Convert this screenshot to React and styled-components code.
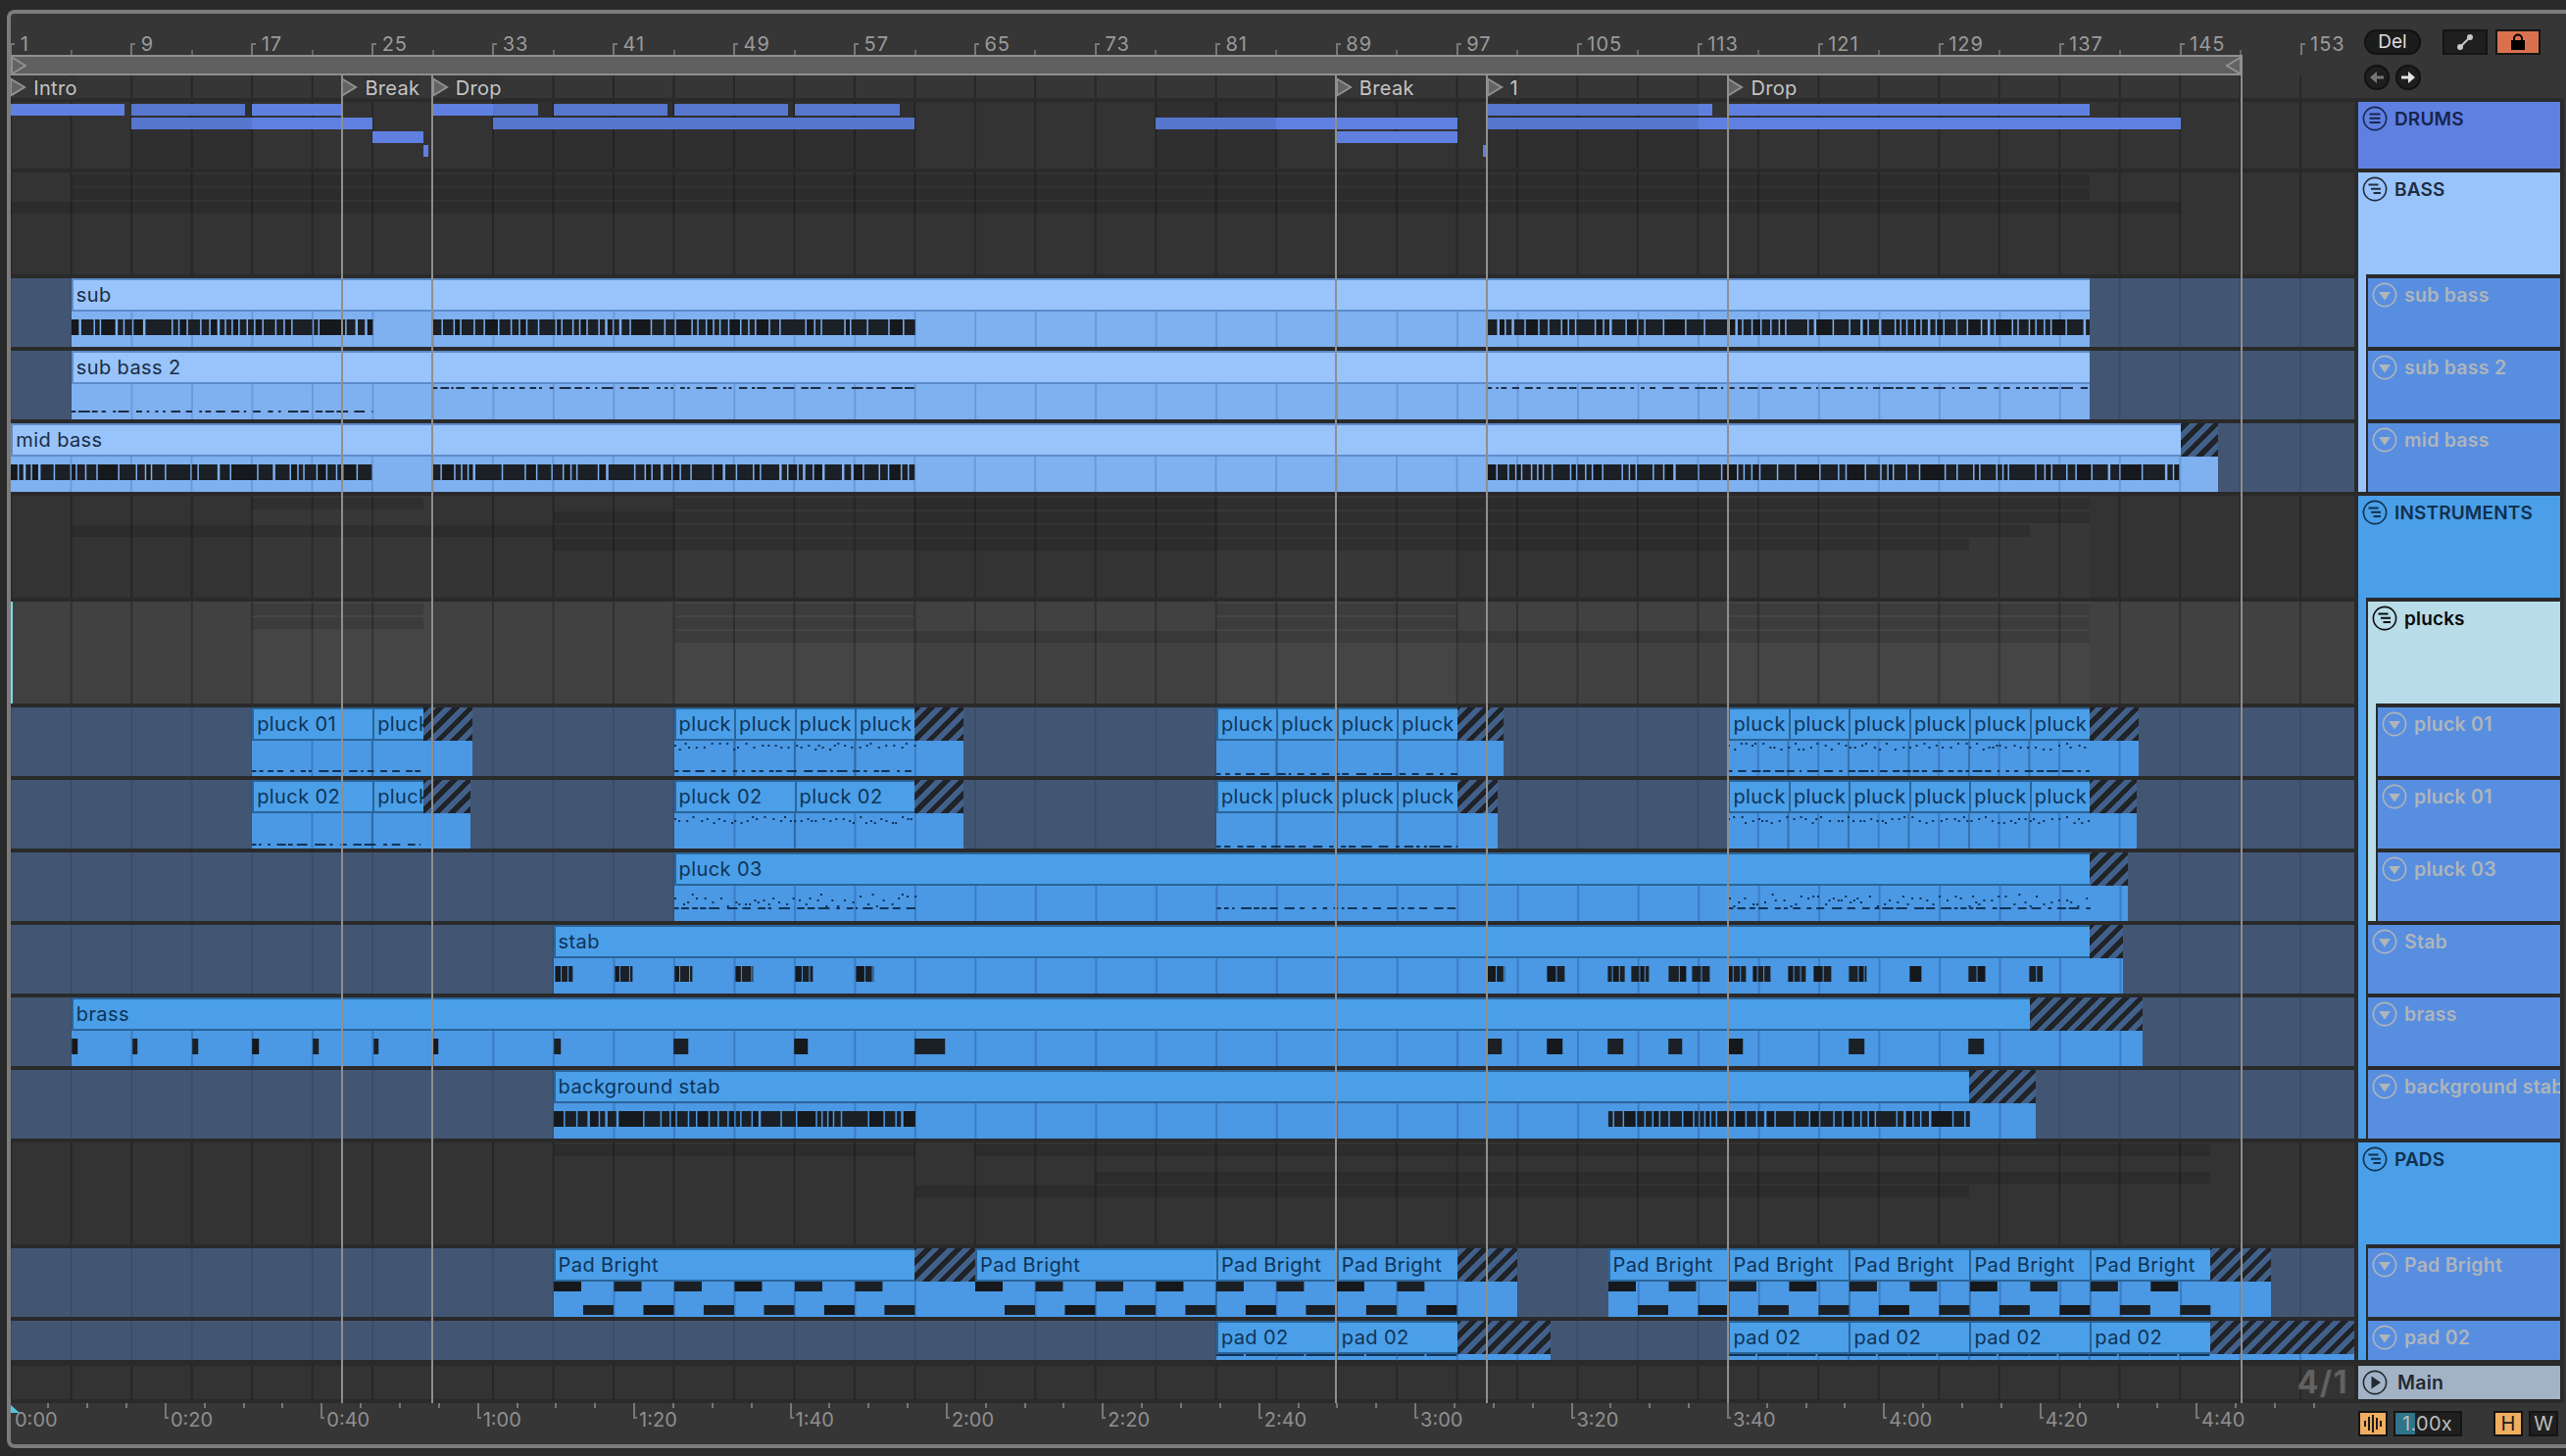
/* --- Packages --- */
import React from 'react';
import styled, { createGlobalStyle } from 'styled-components';

/* --- Timeline helpers --- */
const BAR = 15.37;
const ORIGIN = 0.3; // bar 1, measured from the left edge of the lanes
const barX = bar => ORIGIN + (bar - 1) * BAR;
const LANE_WIDTH = 2391;

const rng = seed => {
  let s = seed;
  return () => {
    s = (s * 1664525 + 1013904223) % 4294967296;
    return s / 4294967296;
  };
};

const range = (from, to, step) => {
  const out = [];
  for (let v = from; v <= to; v += step) out.push(v);
  return out;
};

/* --- Note drawing: every kind returns [x, y, w, h] in lane pixels --- */
const dense = (from, to, y, h, seed) => {
  const rand = rng(seed);
  const out = [];
  let x = barX(from);
  const end = barX(to);
  while (x < end) {
    const w = 4 + rand() * rand() * 26;
    out.push([x, y, Math.min(w, end - x), h]);
    x += w + 1.5 + Math.round(rand() * rand()) * 1;
  }
  return out;
};

const dashes = (from, to, y, seed) => {
  const rand = rng(seed);
  const out = [];
  let x = barX(from);
  const end = barX(to);
  while (x < end) {
    const w = 2 + rand() * 10;
    out.push([x, y, Math.min(w, end - x), 2]);
    x += w + 2 + rand() * 6;
  }
  return out;
};

const dots = (from, to, top, spread, seed) => {
  const rand = rng(seed);
  const out = [];
  let x = barX(from);
  const end = barX(to);
  while (x < end) {
    out.push([x, top + Math.round((rand() * spread) / 2) * 2, 2, 2]);
    x += 3 + rand() * 6;
  }
  return out;
};

const chunks = (spans, y, h) => spans.map(([a, b]) => [a - 11, y, b - a, h]);

const stabChunk = (x, w, out, rand) => {
  let at = x;
  while (at < x + w) {
    const part = 4 + rand() * 7;
    out.push([at, 8, Math.min(part, x + w - at), 16]);
    at += part + 1;
  }
};

const stabNotes = () => {
  const rand = rng(11);
  const out = [];
  [566, 627, 688, 750, 811, 873, 1517, 1578, 1640, 1664, 1702, 1726, 1763, 1788, 1824, 1850, 1886, 2008, 2070].forEach(x =>
    stabChunk(x - 11, x === 2070 ? 14 : 18, out, rand)
  );
  out.push([1937, 8, 12, 16]);
  return out;
};

const padNotes = (from, to, top, bottom, h) => {
  const out = [];
  range(from, to - 4, 4).forEach(bar => {
    out.push([barX(bar), top, 28, h]);
    out.push([barX(bar) + 30, bottom, 31, h]);
  });
  return out;
};

/* --- Data --- */
const BASS_CLIP = { head: '#98c4fb', body: '#7fb0ef', edge: '#5c8cca', line: '#6a9ade', text: '#1c2c44' };
const INST_CLIP = { head: '#4a9fe8', body: '#4b98e4', edge: '#2b6498', line: '#3c7dc4', text: '#0f3357' };

const LIT_BANDS = [[17, 29], [45, 61], [81, 97], [115, 139]];

const TRACKS = [
  {
    id: 'drums',
    h: 68,
    tone: 'group',
    bright: true,
    strips: [
      [[1, 8.5], [9, 16.5], [17, 23], [29, 36], [37, 44.6], [45, 52.6], [53, 60], [99, 113.9], [115, 139]],
      [[9, 25], [33, 61], [77, 97], [99, 145]],
      [[25, 28.4], [89, 97]],
      [[28.4, 28.7], [98.7, 99]]
    ],
    dimmed: [[9, 17], [33, 61], [77, 85], [99, 113]]
  },
  { id: 'bass', h: 104, tone: 'group', strips: [[[5, 139]], [[5, 139]], [[1, 145]]] },
  {
    id: 'sub',
    h: 70,
    tone: 'track',
    clip: BASS_CLIP,
    blocks: [{ segs: [[5, 139, 'sub']] }],
    notes: [...dense(5, 25, 8, 16, 3), ...dense(29, 61, 8, 16, 5), ...dense(99, 139, 8, 16, 7)]
  },
  {
    id: 'sub2',
    h: 70,
    tone: 'track',
    clip: BASS_CLIP,
    blocks: [{ segs: [[5, 139, 'sub bass 2']] }],
    notes: [...dashes(5, 25, 27, 9), ...dashes(29, 61, 3, 10), ...dashes(99, 139, 3, 12)]
  },
  {
    id: 'mid',
    h: 70,
    tone: 'track',
    clip: BASS_CLIP,
    blocks: [{ segs: [[1, 145, 'mid bass']], end: 147.5 }],
    notes: [...dense(1, 25, 8, 16, 13), ...dense(29, 61, 8, 16, 15), ...dense(99, 145, 8, 16, 17)]
  },
  { id: 'inst', h: 104, tone: 'group', lit: LIT_BANDS, strips: [[[17, 28.4], [45, 139]], [[37, 139]], [[5, 135]], [[37, 131]]] },
  {
    id: 'plucks',
    h: 104,
    tone: 'plucks',
    lit: LIT_BANDS,
    strips: [
      [[17, 28.4], [45, 61], [81, 97], [115, 139]],
      [[17, 28.4], [45, 61], [81, 97], [115, 139]],
      [[45, 139]]
    ]
  },
  {
    id: 'pluck1',
    h: 70,
    tone: 'track',
    clip: INST_CLIP,
    blocks: [
      { segs: [[17, 25, 'pluck 01'], [25, 28.4, 'pluck']], end: 31.65 },
      { segs: [[45, 49, 'pluck'], [49, 53, 'pluck'], [53, 57, 'pluck'], [57, 61, 'pluck']], end: 64.25 },
      { segs: [[81, 85, 'pluck'], [85, 89, 'pluck'], [89, 93, 'pluck'], [93, 97, 'pluck']], end: 100.1 },
      {
        segs: [[115, 119, 'pluck'], [119, 123, 'pluck'], [123, 127, 'pluck'], [127, 131, 'pluck'], [131, 135, 'pluck'], [135, 139, 'pluck']],
        end: 142.2
      }
    ],
    notes: [
      ...dashes(17, 28.2, 30, 21),
      ...dots(45, 61, 2, 6, 22),
      ...dashes(45, 61, 30, 23),
      ...dashes(81, 97, 33, 24),
      ...dots(115, 139, 2, 6, 25),
      ...dashes(115, 139, 30, 26)
    ]
  },
  {
    id: 'pluck2',
    h: 70,
    tone: 'track',
    clip: INST_CLIP,
    blocks: [
      { segs: [[17, 25, 'pluck 02'], [25, 28.4, 'pluck']], end: 31.5 },
      { segs: [[45, 53, 'pluck 02'], [53, 61, 'pluck 02']], end: 64.25 },
      { segs: [[81, 85, 'pluck'], [85, 89, 'pluck'], [89, 93, 'pluck'], [93, 97, 'pluck']], end: 99.7 },
      {
        segs: [[115, 119, 'pluck'], [119, 123, 'pluck'], [123, 127, 'pluck'], [127, 131, 'pluck'], [131, 135, 'pluck'], [135, 139, 'pluck']],
        end: 142.1
      }
    ],
    notes: [
      ...dashes(17, 28.2, 31, 31),
      ...dots(45, 61, 3, 6, 32),
      ...dashes(81, 97, 33, 33),
      ...dots(115, 139, 3, 6, 34)
    ]
  },
  {
    id: 'pluck3',
    h: 70,
    tone: 'track',
    clip: INST_CLIP,
    blocks: [{ segs: [[45, 139, 'pluck 03']], end: 141.5 }],
    notes: [...dots(45, 61, 8, 12, 41), ...dashes(45, 61, 22, 42), ...dashes(81, 97, 22, 43), ...dots(115, 139, 8, 12, 44), ...dashes(115, 139, 22, 45)]
  },
  {
    id: 'stab',
    h: 70,
    tone: 'track',
    clip: INST_CLIP,
    blocks: [{ segs: [[37, 139, 'stab']], end: 141.2 }],
    notes: stabNotes()
  },
  {
    id: 'brass',
    h: 70,
    tone: 'track',
    clip: INST_CLIP,
    blocks: [{ segs: [[5, 135, 'brass']], end: 142.5 }],
    notes: chunks(
      [[73, 79], [135, 140], [196, 202], [257, 264], [319, 325], [381, 386], [442, 447], [565, 572], [687, 702], [810, 824], [933, 964],
        [1517, 1532], [1578, 1594], [1640, 1656], [1702, 1716], [1763, 1778], [1886, 1902], [2008, 2024]],
      8,
      16
    )
  },
  {
    id: 'bgstab',
    h: 70,
    tone: 'track',
    clip: INST_CLIP,
    blocks: [{ segs: [[37, 131, 'background stab']], end: 135.4 }],
    notes: [...dense(37, 61, 8, 16, 51), ...dense(107, 131, 8, 16, 53)]
  },
  { id: 'pads', h: 104, tone: 'group', strips: [[[37, 61], [65, 147]], [], [[73, 147]], [[61, 131]]] },
  {
    id: 'bright',
    h: 70,
    tone: 'track',
    clip: INST_CLIP,
    blocks: [
      { segs: [[37, 61, 'Pad Bright']], end: 65 },
      { segs: [[65, 81, 'Pad Bright'], [81, 89, 'Pad Bright'], [89, 97, 'Pad Bright']], end: 101 },
      { segs: [[107, 115, 'Pad Bright'], [115, 123, 'Pad Bright'], [123, 131, 'Pad Bright'], [131, 139, 'Pad Bright'], [139, 147, 'Pad Bright']], end: 151 }
    ],
    notes: [...padNotes(37, 61, 0, 24, 10), ...padNotes(65, 97, 0, 24, 10), ...padNotes(107, 147, 0, 24, 10)]
  },
  {
    id: 'pad2',
    h: 40,
    tone: 'track',
    clip: INST_CLIP,
    blocks: [
      { segs: [[81, 89, 'pad 02'], [89, 97, 'pad 02']], end: 103.2 },
      { segs: [[115, 123, 'pad 02'], [123, 131, 'pad 02'], [131, 139, 'pad 02'], [139, 147, 'pad 02']], end: 157 }
    ],
    notes: [...padNotes(81, 97, 0, 0, 2), ...padNotes(115, 147, 0, 0, 2)]
  }
];

const LOCATORS = [
  { bar: 1, name: 'Intro' },
  { bar: 23, name: 'Break' },
  { bar: 29, name: 'Drop' },
  { bar: 89, name: 'Break' },
  { bar: 99, name: '1' },
  { bar: 115, name: 'Drop' }
];

const TIME_STEP = 159.4;
const TIME_ORIGIN = -2.5;
const TIMES = ['0:00', '0:20', '0:40', '1:00', '1:20', '1:40', '2:00', '2:20', '2:40', '3:00', '3:20', '3:40', '4:00', '4:20', '4:40'];

/* --- Styles --- */
const GlobalStyle = createGlobalStyle`
  html, body {
    margin: 0;
    background: #2a2a2a;
    font-family: Inter, "Liberation Sans", sans-serif;
  }
  #root { height: 1486px; overflow: hidden; }
`;

const Frame = styled.div`
  position: relative;
  box-sizing: border-box;
  width: 2611px;
  height: 1468px;
  margin: 10px 0 0 7px;
  display: flex;
  flex-direction: column;
  background: #363636;
  border: solid #7c7c7c;
  border-width: 4px 0 4px 4px;
  border-radius: 8px 0 0 8px;
  overflow: hidden;
`;

const Header = styled.div`
  height: 86px;
  display: flex;
`;

const RulerArea = styled.div`
  position: relative;
  width: ${LANE_WIDTH}px;
`;

const BarTick = styled.div`
  position: absolute;
  top: 30px;
  width: 5px;
  height: 12px;
  border-left: 2px solid #777;
  border-top: 2px solid #777;
  box-sizing: border-box;
`;

const MinorTick = styled.div`
  position: absolute;
  top: 37px;
  width: 2px;
  height: 5px;
  background: #666;
`;

const BarLabel = styled.span`
  position: absolute;
  top: 19px;
  color: #9a9a9a;
  font-size: 20px;
  letter-spacing: 1px;
  line-height: 24px;
`;

const LoopBrace = styled.div`
  position: absolute;
  top: 42px;
  left: 0;
  height: 21px;
  width: 2276px;
  box-sizing: border-box;
  background: #5f5f5f;
  border: solid #8f8f8f;
  border-width: 2px 2px 2px 0;
`;

const LocatorRow = styled.div`
  position: absolute;
  top: 63px;
  left: 0;
  right: 0;
  height: 23px;
  background-image: linear-gradient(90deg, transparent calc(100% - 2px), #272727 0);
  background-size: ${BAR * 4}px 100%;
  background-position-x: 1.3px;
`;

const LocatorMark = styled.div`
  position: absolute;
  top: 2px;
  height: 20px;
  display: flex;
  align-items: center;
  gap: 7px;
`;

const LocatorName = styled.span`
  color: #c4c4c4;
  font-size: 20px;
  letter-spacing: 0.3px;
  line-height: 22px;
  padding-top: 1px;
  background: #333;
`;

const Controls = styled.div`
  flex: 1;
  padding: 16px 0 0 10px;
  display: grid;
  grid-template-columns: 58px 22px 46px 8px 46px;
  grid-template-rows: 26px 26px;
  row-gap: 10px;
  align-items: start;
`;

const Pill = styled.div`
  height: 26px;
  border-radius: 13px;
  background: #1c1c1c;
  box-shadow: inset 0 0 0 2px #131313;
  color: #dddddd;
  font-size: 19px;
  line-height: 26px;
  text-align: center;
`;

const HeadButton = styled.div`
  grid-column: ${p => p.$col};
  height: 26px;
  box-sizing: border-box;
  border: 2px solid #141414;
  background: ${p => p.$bg};
  display: flex;
  align-items: center;
  justify-content: center;
`;

const ArrowPair = styled.div`
  grid-column: 1;
  grid-row: 2;
  display: flex;
  justify-content: space-between;
`;

const ArrowButton = styled.div`
  width: 26px;
  height: 26px;
  border-radius: 50%;
  background: #1e1e1e;
  box-shadow: inset 0 0 0 2px #131313;
  display: flex;
  align-items: center;
  justify-content: center;
`;

const Body = styled.div`
  flex: 1;
  display: flex;
  background: #2a2a2a;
  padding: 4px 0;
`;

const Lanes = styled.div`
  width: ${LANE_WIDTH}px;
  display: flex;
  flex-direction: column;
  gap: 4px;
`;

const laneBg = { group: '#333333', plucks: '#414141', track: '#425674', main: '#333333' };
const laneLine = { group: '#262626', plucks: '#303030', track: '#3a4d68', main: '#262626' };

const Lane = styled.div`
  position: relative;
  flex: none;
  height: ${p => p.$h}px;
  margin-top: ${p => p.$mt || 0}px;
  overflow: hidden;
  background-color: ${p => laneBg[p.$tone]};
  background-image: linear-gradient(90deg, transparent calc(100% - 2px), ${p => laneLine[p.$tone]} 0);
  background-size: ${BAR * 4}px 100%;
  background-position-x: 1.3px;
`;

const Band = styled.div`
  position: absolute;
  top: 0;
  bottom: 0;
  background: ${p => (p.$dark ? 'rgba(0, 0, 0, 0.08)' : 'rgba(255, 255, 255, 0.025)')};
`;

const Strip = styled.div`
  position: absolute;
  height: 12px;
  background: ${p => (p.$bright ? '#5f80e0' : 'rgba(0, 0, 0, 0.13)')};
`;

const ClipBlock = styled.div`
  position: absolute;
  top: 0;
  bottom: 0;
  display: flex;
  flex-direction: column;
  background: ${p => p.$c.body};
`;

const ClipHeads = styled.div`
  display: flex;
  flex: none;
  height: 34px;
`;

const ClipHead = styled.div`
  flex: none;
  box-sizing: border-box;
  padding-left: 3px;
  background: ${p => p.$c.head};
  border: solid ${p => p.$c.edge};
  border-width: 2px 0 2px 2px;
  color: ${p => p.$c.text};
  font-size: 20px;
  letter-spacing: 0.4px;
  line-height: 30px;
  white-space: nowrap;
  overflow: hidden;
`;

const Hatch = styled.div`
  flex: 1;
  background: repeating-linear-gradient(-45deg, #202328 0 5.5px, #41608a 5.5px 11px);
`;

const ClipRoll = styled.svg`
  flex: 1;
  display: block;
  width: 100%;
  min-height: 0;
`;

const MainLaneLabel = styled.span`
  position: absolute;
  right: 6px;
  top: 0;
  color: #626262;
  font-size: 32px;
  letter-spacing: 1.5px;
  line-height: 34px;
  font-weight: 700;
`;

const Titles = styled.div`
  flex: none;
  width: 206px;
  margin: 0 4px;
  display: flex;
  flex-direction: column;
  gap: 4px;
`;

const TitleRow = styled.div`
  flex: none;
  box-sizing: border-box;
  height: ${p => p.$h}px;
  margin-top: ${p => p.$mt || 0}px;
  padding: 4px 0 0 4px;
  display: flex;
  align-items: flex-start;
  gap: ${p => p.$gap || 7}px;
  background: ${p => p.$bg};
  color: ${p => p.$fg};
  font-size: ${p => (p.$child ? 19.5 : 19)}px;
  letter-spacing: ${p => (p.$child ? 0.25 : 0.15)}px;
  line-height: 27px;
  font-weight: 600;
  white-space: nowrap;
  overflow: hidden;
`;

const TitleGroup = styled.div`
  flex: none;
  display: flex;
  flex-direction: column;
  background: ${p => p.$bg};
`;

const TitleChildren = styled.div`
  margin-left: 8px;
  border-left: 2px solid #2a2a2a;
  background: #2a2a2a;
  padding-top: 4px;
  display: flex;
  flex-direction: column;
  gap: 4px;
`;

const IconSvg = styled.svg`
  flex: none;
  display: block;
`;

const Footer = styled.div`
  position: relative;
  flex: 1;
  display: flex;
`;

const TimeRuler = styled.div`
  position: relative;
  width: ${LANE_WIDTH}px;
`;

const TimeTick = styled.div`
  position: absolute;
  top: 0;
  width: ${p => (p.$major ? 4 : 2)}px;
  height: ${p => (p.$major ? 16 : 5)}px;
  box-sizing: border-box;
  border-left: 2px solid #777;
  border-bottom: ${p => (p.$major ? '2px solid #777' : '0')};
`;

const TimeLabel = styled.span`
  position: absolute;
  top: 5px;
  color: #8f8f8f;
  font-size: 20px;
  line-height: 24px;
`;

const Playhead = styled.div`
  position: absolute;
  left: 0;
  top: 2px;
  width: 0;
  height: 0;
  border-style: solid;
  border-width: 8px 0 0 9px;
  border-color: transparent transparent transparent #55c4dc;
`;

const FootControls = styled.div`
  flex: 1;
  padding: 8px 0 0 4px;
  display: flex;
  align-items: flex-start;
  gap: 6px;
`;

const FootButton = styled.div`
  width: 30px;
  height: 26px;
  margin-left: ${p => p.$ml || 0}px;
  box-sizing: border-box;
  border: 2px solid #141414;
  background: ${p => (p.$on ? '#f0ae60' : '#1f1f1f')};
  color: ${p => (p.$on ? '#1c1c1c' : '#bdbdbd')};
  font-size: 20px;
  line-height: 22px;
  text-align: center;
  display: flex;
  align-items: center;
  justify-content: center;
`;

const TempoField = styled.div`
  position: relative;
  width: 70px;
  height: 26px;
  box-sizing: border-box;
  border: 2px solid #141414;
  background: #1f1f1f;
  color: #bdbdbd;
  font-size: 20px;
  letter-spacing: 0.3px;
  line-height: 22px;
  padding-left: 7px;
`;

const TempoFill = styled.div`
  position: absolute;
  left: 0;
  top: 0;
  bottom: 0;
  width: 20px;
  background: #2f7488;
`;

const TempoText = styled.span`
  position: relative;
`;

const Overlay = styled.div`
  position: absolute;
  left: ${p => p.$x}px;
  top: ${p => p.$top}px;
  bottom: 42px;
  width: 2px;
  background: #8f8f8f;
  pointer-events: none;
`;

const SelectMark = styled.div`
  position: absolute;
  left: 0;
  top: 600px;
  width: 2px;
  height: 104px;
  background: #7fd8e6;
`;

const EdgeStrip = styled.div`
  position: absolute;
  right: 0;
  top: 86px;
  bottom: 42px;
  width: 2px;
  background: #363636;
`;

/* --- Icons --- */
const Circle = ({ color, children }) => (
  <IconSvg width="26" height="26" viewBox="0 0 26 26">
    <circle cx="13" cy="13" r="11.6" fill="none" stroke={color} strokeWidth="1.6" />
    {children}
  </IconSvg>
);

const FoldedIcon = ({ color }) => (
  <Circle color={color}>
    <path d="M7.5 8.5h11M7.5 12.8h11M7.5 17h11" stroke={color} strokeWidth="2" fill="none" />
  </Circle>
);

const GroupIcon = ({ color }) => (
  <Circle color={color}>
    <path d="M6.5 8.5h10M9 12.8h10M11.5 17h7.5" stroke={color} strokeWidth="2" fill="none" />
  </Circle>
);

const DownIcon = ({ color }) => (
  <Circle color={color}>
    <path d="M7 10h12l-6 8.5z" fill={color} />
  </Circle>
);

const PlayIcon = ({ color }) => (
  <Circle color={color}>
    <path d="M9.5 6.5l9.5 6.5-9.5 6.5z" fill={color} />
  </Circle>
);

const Triangle = ({ flip }) => (
  <IconSvg width="17" height="20" viewBox="0 0 17 20" style={flip ? { transform: 'scaleX(-1)' } : undefined}>
    <path d="M1 1.5l14 8.5-14 8.5z" fill="#636363" stroke="#909090" strokeWidth="2" />
  </IconSvg>
);

const LinkIcon = () => (
  <IconSvg width="18" height="18" viewBox="0 0 18 18">
    <path d="M4 14L14 4" stroke="#c8c8c8" strokeWidth="2" />
    <circle cx="4" cy="14" r="3" fill="#c8c8c8" />
    <circle cx="14" cy="4" r="3" fill="#c8c8c8" />
  </IconSvg>
);

const LockIcon = () => (
  <IconSvg width="16" height="18" viewBox="0 0 16 18">
    <path d="M4 8V5.5a4 4 0 018 0V8" fill="none" stroke="#000" strokeWidth="2" />
    <rect x="1" y="7" width="14" height="10" fill="#000" />
  </IconSvg>
);

const ArrowIcon = ({ color, flip }) => (
  <IconSvg width="16" height="14" viewBox="0 0 16 14" style={flip ? { transform: 'scaleX(-1)' } : undefined}>
    <path d="M1 5.5h7V1l7 6-7 6V8.5H1z" fill={color} />
  </IconSvg>
);

const WaveIcon = () => (
  <IconSvg width="20" height="18" viewBox="0 0 20 18">
    <path d="M2 6v6M6 2v14M10 0v18M14 3v12M18 6v6" stroke="#1c1c1c" strokeWidth="2" />
  </IconSvg>
);

/* --- Parts --- */
const BlockRoll = ({ track, block, left, width }) => {
  const c = track.clip;
  const lines = range(-3, 160, 4)
    .map(barX)
    .filter(x => x > left && x < left + width);
  const notes = (track.notes || []).filter(([x, , w]) => x + w > left && x < left + width);
  const height = track.h - 34;
  return (
    <ClipRoll viewBox={`0 0 ${width} ${height}`} preserveAspectRatio="none">
      {lines.map(x => (
        <rect key={x} x={x - left - 1} y="0" width="2" height={height} fill={c.line} />
      ))}
      {block.segs.map(([from], i) =>
        i > 0 ? <rect key={from} x={barX(from) - left - 1} y="0" width="2" height={height} fill={c.edge} opacity="0.7" /> : null
      )}
      {notes.map(([x, y, w, h], i) => (
        <rect
          key={`${x}-${y}-${i}`}
          x={x - left}
          y={y}
          width={w}
          height={h}
          fill={h <= 2 ? c.text : i % 3 === 0 ? '#15181c' : '#1b2026'}
        />
      ))}
    </ClipRoll>
  );
};

const Clip = ({ track, block }) => {
  const first = block.segs[0][0];
  const last = block.segs[block.segs.length - 1][1];
  const left = barX(first);
  const width = barX(block.end || last) - left;
  return (
    <ClipBlock $c={track.clip} style={{ left, width }}>
      <ClipHeads>
        {block.segs.map(([from, to, name]) => (
          <ClipHead key={from} $c={track.clip} style={{ width: (to - from) * BAR }}>
            {name}
          </ClipHead>
        ))}
        {block.end ? <Hatch /> : null}
      </ClipHeads>
      <BlockRoll track={track} block={block} left={left} width={width} />
    </ClipBlock>
  );
};

const TrackLane = ({ track }) => (
  <Lane $h={track.h} $tone={track.tone}>
    {(track.lit || []).map(([from, to]) => (
      <Band key={from} style={{ left: barX(from), width: (to - from) * BAR }} />
    ))}
    {(track.strips || []).map((row, r) =>
      row.map(([from, to]) => (
        <Strip
          key={`${r}-${from}`}
          $bright={track.bright}
          style={{ top: 2 + r * 14, left: barX(from), width: (to - from) * BAR }}
        />
      ))
    )}
    {(track.dimmed || []).map(([from, to]) => (
      <Band key={from} $dark style={{ left: barX(from), width: (to - from) * BAR }} />
    ))}
    {(track.blocks || []).map(block => (
      <Clip key={block.segs[0][0]} track={track} block={block} />
    ))}
  </Lane>
);

const CHILD = { bg: '#588ee0', fg: '#afb5ba' };
const ChildTitle = ({ name, h }) => (
  <TitleRow $h={h} $bg={CHILD.bg} $fg={CHILD.fg} $child>
    <DownIcon color={CHILD.fg} />
    {name}
  </TitleRow>
);

const GroupTitle = ({ name, bg, fg, h, folded }) => (
  <TitleRow $h={h} $bg={bg} $fg={fg}>
    {folded ? <FoldedIcon color={fg} /> : <GroupIcon color={fg} />}
    {name}
  </TitleRow>
);

const TrackTitles = () => (
  <Titles>
    <GroupTitle name="DRUMS" bg="#5f80e0" fg="#16244e" h={68} folded />
    <TitleGroup $bg="#98c4fb">
      <GroupTitle name="BASS" bg="#98c4fb" fg="#1f2d3f" h={104} />
      <TitleChildren>
        <ChildTitle name="sub bass" h={70} />
        <ChildTitle name="sub bass 2" h={70} />
        <ChildTitle name="mid bass" h={70} />
      </TitleChildren>
    </TitleGroup>
    <TitleGroup $bg="#4a9fe8">
      <GroupTitle name="INSTRUMENTS" bg="#4a9fe8" fg="#10304f" h={104} />
      <TitleChildren>
        <TitleGroup $bg="#b8dce8">
          <GroupTitle name="plucks" bg="#b8dce8" fg="#0a0a0a" h={104} />
          <TitleChildren>
            <ChildTitle name="pluck 01" h={70} />
            <ChildTitle name="pluck 01" h={70} />
            <ChildTitle name="pluck 03" h={70} />
          </TitleChildren>
        </TitleGroup>
        <ChildTitle name="Stab" h={70} />
        <ChildTitle name="brass" h={70} />
        <ChildTitle name="background stab" h={70} />
      </TitleChildren>
    </TitleGroup>
    <TitleGroup $bg="#4a9fe8">
      <GroupTitle name="PADS" bg="#4a9fe8" fg="#10304f" h={104} />
      <TitleChildren>
        <ChildTitle name="Pad Bright" h={70} />
        <ChildTitle name="pad 02" h={40} />
      </TitleChildren>
    </TitleGroup>
    <TitleRow $h={34} $mt={2} $gap={10} $child $bg="#a2b3c5" $fg="#222a33">
      <PlayIcon color="#222a33" />
      Main
    </TitleRow>
  </Titles>
);

const Ruler = () => (
  <RulerArea>
    {range(1, 153, 8).map(bar => (
      <React.Fragment key={bar}>
        <BarTick style={{ left: barX(bar) - 1 }} />
        <BarLabel style={{ left: barX(bar) + 9.5 }}>{bar}</BarLabel>
      </React.Fragment>
    ))}
    {range(5, 149, 8).map(bar => (
      <MinorTick key={bar} style={{ left: barX(bar) - 1 }} />
    ))}
    <LoopBrace />
    <LocatorMark style={{ top: 43, left: 0 }}>
      <Triangle />
    </LocatorMark>
    <LocatorMark style={{ top: 43, left: 2259 }}>
      <Triangle flip />
    </LocatorMark>
    <LocatorRow>
      {LOCATORS.map(loc => (
        <LocatorMark key={`${loc.bar}`} style={{ left: barX(loc.bar) - 1 }}>
          <Triangle />
          <LocatorName>{loc.name}</LocatorName>
        </LocatorMark>
      ))}
    </LocatorRow>
  </RulerArea>
);

const TimeLine = () => (
  <TimeRuler>
    {range(0, 59, 1).map(i => {
      const x = TIME_ORIGIN + i * (TIME_STEP / 4);
      if (i % 4 === 0) return null;
      return x < LANE_WIDTH - 4 ? <TimeTick key={i} style={{ left: x }} /> : null;
    })}
    {TIMES.map((t, i) => (
      <React.Fragment key={t}>
        {i > 0 ? <TimeTick $major style={{ left: TIME_ORIGIN + i * TIME_STEP }} /> : null}
        <TimeLabel style={{ left: i > 0 ? TIME_ORIGIN + i * TIME_STEP + 6 : 4 }}>{t}</TimeLabel>
      </React.Fragment>
    ))}
    <Playhead />
  </TimeRuler>
);

/* --- Component --- */
const App = () => (
  <>
    <GlobalStyle />
    <Frame>
      <Header>
        <Ruler />
        <Controls>
          <Pill>Del</Pill>
          <HeadButton $col={3} $bg="#1f1f1f">
            <LinkIcon />
          </HeadButton>
          <HeadButton $col={5} $bg="#d9714f">
            <LockIcon />
          </HeadButton>
          <ArrowPair>
            <ArrowButton>
              <ArrowIcon color="#757575" flip />
            </ArrowButton>
            <ArrowButton>
              <ArrowIcon color="#e4e4e4" />
            </ArrowButton>
          </ArrowPair>
        </Controls>
      </Header>
      <Body>
        <Lanes>
          {TRACKS.map(track => (
            <TrackLane key={track.id} track={track} />
          ))}
          <Lane $h={34} $tone="main" $mt={2}>
            <MainLaneLabel>4/1</MainLaneLabel>
          </Lane>
        </Lanes>
        <TrackTitles />
      </Body>
      <Footer>
        <TimeLine />
        <FootControls>
          <FootButton $on>
            <WaveIcon />
          </FootButton>
          <TempoField>
            <TempoFill />
            <TempoText>1.00x</TempoText>
          </TempoField>
          <FootButton $on $ml={26}>
            H
          </FootButton>
          <FootButton>W</FootButton>
        </FootControls>
      </Footer>
      {LOCATORS.slice(1).map(loc => (
        <Overlay key={loc.bar} $x={barX(loc.bar) - 1.5} $top={63} />
      ))}
      <Overlay $x={2275} $top={42} />
      <SelectMark />
      <EdgeStrip />
    </Frame>
  </>
);

export default App;
